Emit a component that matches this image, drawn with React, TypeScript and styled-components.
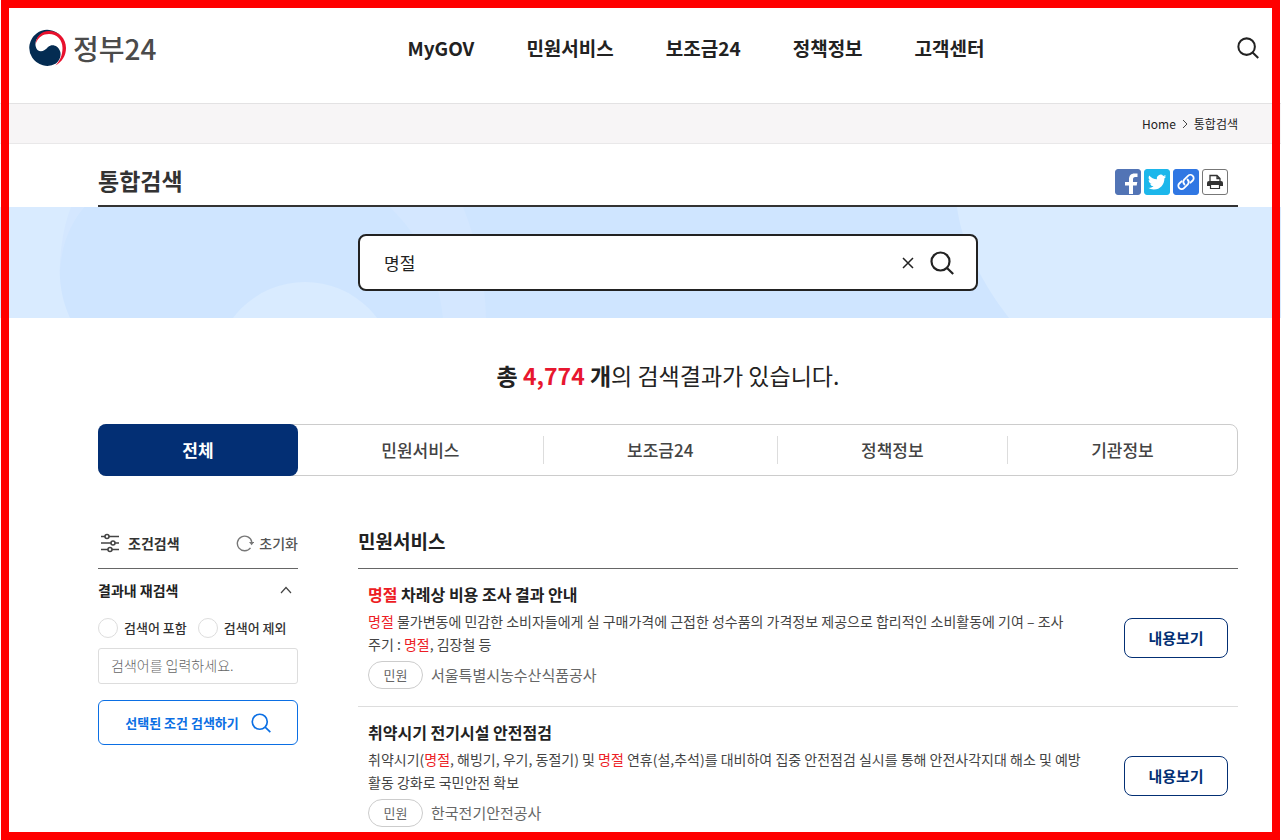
import React from 'react';
import styled, { createGlobalStyle, css } from 'styled-components';

const GlobalStyle = createGlobalStyle`
  *, *::before, *::after { box-sizing: border-box; }
  body {
    margin: 0;
    background: #fff;
    color: #222;
    font-family: "Noto Sans CJK KR", sans-serif;
    font-size: 14px;
  }
  button, input { font: inherit; color: inherit; }
  h1, h2, h3, p, ul { margin: 0; padding: 0; font-weight: inherit; }
  ul { list-style: none; }
  a { color: inherit; text-decoration: none; }
`;

const Page = styled.div`
  min-height: 100vh;
  padding: 8px 0;
`;

const Frame = styled.div`
  position: fixed;
  inset: 0 1px;
  border: 8px solid #f00;
  pointer-events: none;
  z-index: 10;
`;

const inner = css`
  margin: 0 43px 0 98px;
`;

const Header = styled.header`
  display: grid;
  grid-template-columns: 1fr auto 1fr;
  align-items: center;
  height: 96px;
  padding: 0 22px 16px 29px;
  border-bottom: 1px solid #e3e2e3;
`;

const Logo = styled.a`
  display: flex;
  align-items: center;
  gap: 6px;
  color: #4b4b4b;
  font-size: 28px;
  font-weight: 500;
  line-height: 38px;
`;

const Nav = styled.nav`
  display: flex;
  gap: 52px;
  margin-left: 104px;
  font-size: 19px;
  font-weight: 700;
  line-height: 28px;
`;

const IconButton = styled.button`
  display: flex;
  padding: 0;
  border: 0;
  background: none;
  cursor: pointer;
`;

const HeaderSearch = styled(IconButton)`
  justify-self: end;
`;

const Breadcrumb = styled.nav`
  display: flex;
  justify-content: flex-end;
  align-items: center;
  gap: 6px;
  height: 40px;
  padding-right: 43px;
  border-bottom: 1px solid #e9e8e9;
  background: #f7f5f6;
  font-size: 12px;
`;

const TitleBar = styled.div`
  ${inner}
  display: flex;
  justify-content: space-between;
  align-items: flex-end;
  height: 63px;
  padding: 0 10px 8px 0;
  border-bottom: 2px solid #333;
`;

const PageTitle = styled.h1`
  color: #333;
  font-size: 23px;
  font-weight: 700;
  line-height: 34px;
`;

const ShareList = styled.div`
  display: flex;
  gap: 3px;
  padding-bottom: 2px;
`;

const ShareButton = styled.button<{ $bg: string; $line?: string }>`
  display: flex;
  width: 26px;
  height: 26px;
  padding: 0;
  overflow: hidden;
  border: 1px solid ${(p) => p.$line ?? p.$bg};
  border-radius: 3px;
  background: ${(p) => p.$bg};
`;

const Banner = styled.section`
  display: grid;
  height: 111px;
  overflow: hidden;
  background: #d9ebff;
  > * { grid-area: 1 / 1; }
`;

const BannerArt = styled.svg`
  display: block;
`;

const SearchForm = styled.form`
  display: flex;
  align-items: center;
  justify-self: center;
  gap: 16px;
  width: 620px;
  height: 57px;
  margin: 27px 0 0 55px;
  padding: 0 22px 0 24px;
  border: 2px solid #222;
  border-radius: 8px;
  background: #fff;
  z-index: 1;
`;

const SearchInput = styled.input`
  flex: 1;
  min-width: 0;
  padding: 0;
  border: 0;
  outline: 0;
  background: none;
  font-size: 17px;
`;

const ResultCount = styled.p`
  ${inner}
  padding: 40px 0 31px;
  font-size: 23px;
  line-height: 35px;
  text-align: center;
`;

const Count = styled.em`
  color: #e7172f;
  font-style: normal;
`;

const Tabs = styled.div`
  ${inner}
  display: flex;
  height: 52px;
  border: 1px solid #ccc;
  border-radius: 8px;
`;

const Tab = styled.button<{ $active?: boolean }>`
  display: flex;
  flex: 1 1 auto;
  align-items: center;
  padding: 0;
  border: 0;
  background: none;
  color: #444;
  font-size: 17px;
  font-weight: 500;
  > span {
    flex: 1;
    line-height: 28px;
  }
  & + & > span { border-left: 1px solid #ddd; }
  ${(p) =>
    p.$active &&
    css`
      flex: 0 0 200px;
      margin: -1px 0 -1px -1px;
      border-radius: 8px;
      background: #032f74;
      color: #fff;
      font-weight: 700;
      & + & > span { border-left-color: transparent; }
    `}
  ${(p) =>
    !p.$active &&
    css`
      &:nth-child(2) > span { border-left-color: transparent; }
    `}
`;

const Columns = styled.div`
  ${inner}
  display: grid;
  grid-template-columns: 200px minmax(0, 1fr);
  gap: 60px;
  margin-top: 42px;
`;

const FilterHead = styled.div`
  display: flex;
  justify-content: space-between;
  align-items: center;
  height: 51px;
  border-bottom: 1px solid #666;
`;

const FilterTitle = styled.h2`
  display: flex;
  align-items: center;
  gap: 8px;
  padding-left: 2px;
  color: #333;
  font-size: 14px;
  font-weight: 700;
`;

const ResetButton = styled(IconButton)`
  align-items: center;
  gap: 5px;
  color: #555;
  font-size: 14px;
  font-weight: 500;
`;

const FilterGroup = styled.button`
  display: flex;
  justify-content: space-between;
  align-items: center;
  width: 100%;
  height: 41px;
  padding: 0 6px 0 0;
  border: 0;
  background: none;
  font-size: 14px;
  font-weight: 700;
`;

const RadioRow = styled.div`
  display: flex;
  gap: 11px;
  padding: 8px 0 10px;
`;

const RadioLabel = styled.label`
  display: flex;
  align-items: center;
  gap: 6px;
  height: 20px;
  color: #333;
  font-size: 13px;
  font-weight: 500;
  line-height: 18px;
  white-space: nowrap;
`;

const Radio = styled.input`
  appearance: none;
  width: 20px;
  height: 20px;
  margin: 0;
  border: 1px solid #ddd;
  border-radius: 50%;
  background: #fff;
  &:checked { border: 6px solid #0b6fe4; }
`;

const FilterInput = styled.input`
  width: 100%;
  height: 36px;
  padding: 0 12px 2px;
  border: 1px solid #ddd;
  border-radius: 3px;
  font-size: 14px;
  font-weight: 300;
  &::placeholder { color: #666; opacity: 1; }
`;

const FilterSubmit = styled.button`
  display: flex;
  justify-content: center;
  align-items: center;
  gap: 12px;
  width: 100%;
  height: 45px;
  margin-top: 16px;
  border: 1px solid #0b6fe4;
  border-radius: 6px;
  background: #fff;
  color: #0b6fe4;
  font-size: 13px;
  font-weight: 700;
`;

const ResultsTitle = styled.h2`
  height: 51px;
  padding-top: 9px;
  border-bottom: 1px solid #666;
  font-size: 19px;
  font-weight: 700;
  line-height: 28px;
`;

const ResultItem = styled.li`
  display: flex;
  justify-content: space-between;
  align-items: center;
  height: 138px;
  padding: 0 10px;
  border-bottom: 1px solid #ddd;
`;

const ResultBody = styled.div`
  flex: 0 1 716px;
  padding-bottom: 5px;
`;

const ResultTitle = styled.h3`
  padding-bottom: 3px;
  font-size: 16px;
  font-weight: 700;
  line-height: 26px;
`;

const ResultText = styled.p`
  color: #444;
  font-size: 14px;
  line-height: 23px;
`;

const Mark = styled.mark`
  background: none;
  color: #ed1c24;
`;

const Meta = styled.div`
  display: flex;
  align-items: center;
  gap: 8px;
  padding-top: 5px;
  color: #666;
  font-size: 15px;
  line-height: 28px;
`;

const Tag = styled.span`
  width: 55px;
  border: 1px solid #ccc;
  border-radius: 14px;
  font-size: 13px;
  line-height: 26px;
  text-align: center;
`;

const DetailButton = styled.button`
  width: 104px;
  height: 40px;
  padding: 0;
  border: 1px solid #032f74;
  border-radius: 8px;
  background: #fff;
  color: #032f74;
  font-size: 15px;
  font-weight: 700;
`;

const Magnifier = ({ size, stroke }: { size: number; stroke: number }) => (
  <svg width={size} height={size} viewBox="0 0 24 24" fill="none" stroke="currentColor" strokeWidth={stroke}>
    <circle cx="10.5" cy="10.5" r="9" />
    <path d="M17 17l6.2 6" />
  </svg>
);

const Emblem = () => (
  <svg width="38" height="38" viewBox="0 0 38 38">
    <path d="M32 7.2A18 18 0 1 0 27 34.6C31 31 32.500 26 31 22C29 16.500 23 14.500 19 18C16 21.500 12 24 8.500 21C5 17 6 10 11 6.200C17 1.800 26 2 32 7.200Z" fill="#042c52" />
    <path d="M6.600 15C9 8 14 5 20 5C28 5 33.500 11 33.500 19C33.500 26 31 32 26.500 36.500C33 33 37 26.500 37 19C37 9 29.500 2 20 2C12 2 7 8 6.600 15Z" fill="#e8112d" />
  </svg>
);

const ITEMS = [
  {
    title: <><Mark>명절</Mark> 차례상 비용 조사 결과 안내</>,
    text: (
      <>
        <Mark>명절</Mark> 물가변동에 민감한 소비자들에게 실 구매가격에 근접한 성수품의 가격정보 제공으로 합리적인
        소비활동에 기여 – 조사<br />주기 : <Mark>명절</Mark>, 김장철 등
      </>
    ),
    agency: '서울특별시농수산식품공사',
  },
  {
    title: <>취약시기 전기시설 안전점검</>,
    text: (
      <>
        취약시기(<Mark>명절</Mark>, 해빙기, 우기, 동절기) 및 <Mark>명절</Mark> 연휴(설,추석)를 대비하여 집중 안전점검
        실시를 통해 안전사각지대 해소 및 예방<br />활동 강화로 국민안전 확보
      </>
    ),
    agency: '한국전기안전공사',
  },
];

export default function App() {
  return (
    <Page>
      <GlobalStyle />
      <Header>
        <Logo href="#"><Emblem />정부24</Logo>
        <Nav>
          {['MyGOV', '민원서비스', '보조금24', '정책정보', '고객센터'].map((t) => <a key={t} href="#">{t}</a>)}
        </Nav>
        <HeaderSearch aria-label="검색"><Magnifier size={22} stroke={2.2} /></HeaderSearch>
      </Header>
      <Breadcrumb>
        <a href="#">Home</a>
        <svg width="6" height="10" viewBox="0 0 6 10" fill="none" stroke="#444"><path d="M1 1l4 4-4 4" /></svg>
        <span>통합검색</span>
      </Breadcrumb>
      <TitleBar>
        <PageTitle>통합검색</PageTitle>
        <ShareList>
          <ShareButton $bg="#5274b5" aria-label="페이스북">
            <svg width="24" height="24" viewBox="0 0 24 24" fill="#fff"><path d="M13 25v-9.500H9V12h4V9.500C13 5.500 15 3.500 18.500 3.500h3V7h-2.200C17.500 7 17 8 17 9.500V12h4.300l-.6 3.500H17V25z" /></svg>
          </ShareButton>
          <ShareButton $bg="#1cb7eb" aria-label="트위터">
            <svg width="24" height="24" viewBox="0 0 24 24"><g transform="translate(3 3) scale(.76)"><path fill="#fff" d="M23.950 4.570a10 10 0 01-2.820.77 4.960 4.960 0 002.160-2.720c-.95.550-2 .950-3.130 1.180a4.920 4.920 0 00-8.380 4.480C7.690 8.090 4.070 6.130 1.640 3.160a4.920 4.920 0 001.520 6.570 4.900 4.900 0 01-2.230-.61v.06a4.920 4.920 0 003.950 4.830 5 5 0 01-2.210.08 4.940 4.940 0 004.600 3.420A9.870 9.870 0 010 19.540a13.990 13.990 0 007.550 2.210c9.050 0 14-7.500 14-13.980 0-.21 0-.42-.02-.63a9.940 9.940 0 002.420-2.570z" /></g></svg>
          </ShareButton>
          <ShareButton $bg="#3077e3" aria-label="링크 복사">
            <svg width="24" height="24" viewBox="0 0 24 24" fill="none" stroke="#fff" strokeWidth="1.800" strokeLinecap="round"><path d="M10.500 14.500a3.500 3.500 0 0 1-.3-4.800l3.800-3.900a3.300 3.300 0 0 1 4.700 4.700l-2.200 2.200" /><path d="M13.500 9.500a3.500 3.500 0 0 1 .3 4.800L10 18.200a3.300 3.300 0 0 1-4.700-4.700l2.200-2.200" /></svg>
          </ShareButton>
          <ShareButton $bg="#fff" $line="#777" aria-label="인쇄">
            <svg width="24" height="24" viewBox="0 0 24 24"><path d="M7 11V5.500h7l3 3V11M14 5.500v3h3" fill="none" stroke="#333" strokeWidth="1.300" /><path d="M4 13a2 2 0 0 1 2-2h12a2 2 0 0 1 2 2v3H4z" fill="#333" /><path d="M7.500 14.500h9v4h-9z" fill="#fff" stroke="#333" strokeWidth="1.200" /></svg>
          </ShareButton>
        </ShareList>
      </TitleBar>
      <Banner>
        <BannerArt width="100%" height="111" viewBox="0 0 1281 111" preserveAspectRatio="xMidYMid slice" aria-hidden="true">
          <path d="M84 0C54 35 55 78 70 111H1009C985 80 962 40 957 0Z" fill="#cfe5ff" />
          <path d="M84 0C66 22 61 45 60 66C60 40 64 18 71 0ZM390 0C420 30 438 65 443 111H486C485 70 477 35 463 0Z" fill="#d4e7ff" />
          <circle cx="305" cy="165" r="90" fill="#d9ebff" />
        </BannerArt>
        <SearchForm onSubmit={(e) => e.preventDefault()}>
          <SearchInput aria-label="검색어" defaultValue="명절" />
          <IconButton type="button" aria-label="지우기">
            <svg width="12" height="12" viewBox="0 0 12 12" stroke="#222" strokeWidth="1.500"><path d="M1 1l10 10M11 1L1 11" /></svg>
          </IconButton>
          <IconButton aria-label="검색"><Magnifier size={24} stroke={2.2} /></IconButton>
        </SearchForm>
      </Banner>
      <ResultCount><b>총 <Count>4,774</Count> 개</b>의 검색결과가 있습니다.</ResultCount>
      <Tabs>
        <Tab $active><span>전체</span></Tab>
        {['민원서비스', '보조금24', '정책정보', '기관정보'].map((t) => <Tab key={t}><span>{t}</span></Tab>)}
      </Tabs>
      <Columns>
        <aside>
          <FilterHead>
            <FilterTitle>
              <svg width="20" height="20" viewBox="0 0 20 20" fill="none" stroke="#444" strokeWidth="1.600"><path d="M1 3.500h4M9 3.500h10M1 10h10M15 10h4M1 16.500h7M12 16.500h7" /><circle cx="7" cy="3.500" r="2" /><circle cx="13" cy="10" r="2" /><circle cx="10" cy="16.500" r="2" /></svg>
              조건검색
            </FilterTitle>
            <ResetButton>
              <svg width="18" height="18" viewBox="0 0 18 18" fill="none" stroke="#777" strokeWidth="1.400"><path d="M14.500 13.800A7.300 7.300 0 1 1 15.800 8" /><path d="M13 8h5.200L15.600 11.200z" fill="#777" stroke="none" /></svg>
              초기화
            </ResetButton>
          </FilterHead>
          <FilterGroup>
            결과내 재검색
            <svg width="12" height="8" viewBox="0 0 12 8" fill="none" stroke="#444" strokeWidth="1.200"><path d="M1 7l5-5.500L11 7" /></svg>
          </FilterGroup>
          <RadioRow>
            <RadioLabel><Radio type="radio" name="mode" />검색어 포함</RadioLabel>
            <RadioLabel><Radio type="radio" name="mode" />검색어 제외</RadioLabel>
          </RadioRow>
          <FilterInput aria-label="결과내 검색어" placeholder="검색어를 입력하세요." />
          <FilterSubmit>선택된 조건 검색하기<Magnifier size={20} stroke={2} /></FilterSubmit>
        </aside>
        <main>
          <ResultsTitle>민원서비스</ResultsTitle>
          <ul>
            {ITEMS.map((item) => (
              <ResultItem key={item.agency}>
                <ResultBody>
                  <ResultTitle><a href="#">{item.title}</a></ResultTitle>
                  <ResultText>{item.text}</ResultText>
                  <Meta><Tag>민원</Tag>{item.agency}</Meta>
                </ResultBody>
                <DetailButton>내용보기</DetailButton>
              </ResultItem>
            ))}
          </ul>
        </main>
      </Columns>
      <Frame />
    </Page>
  );
}
